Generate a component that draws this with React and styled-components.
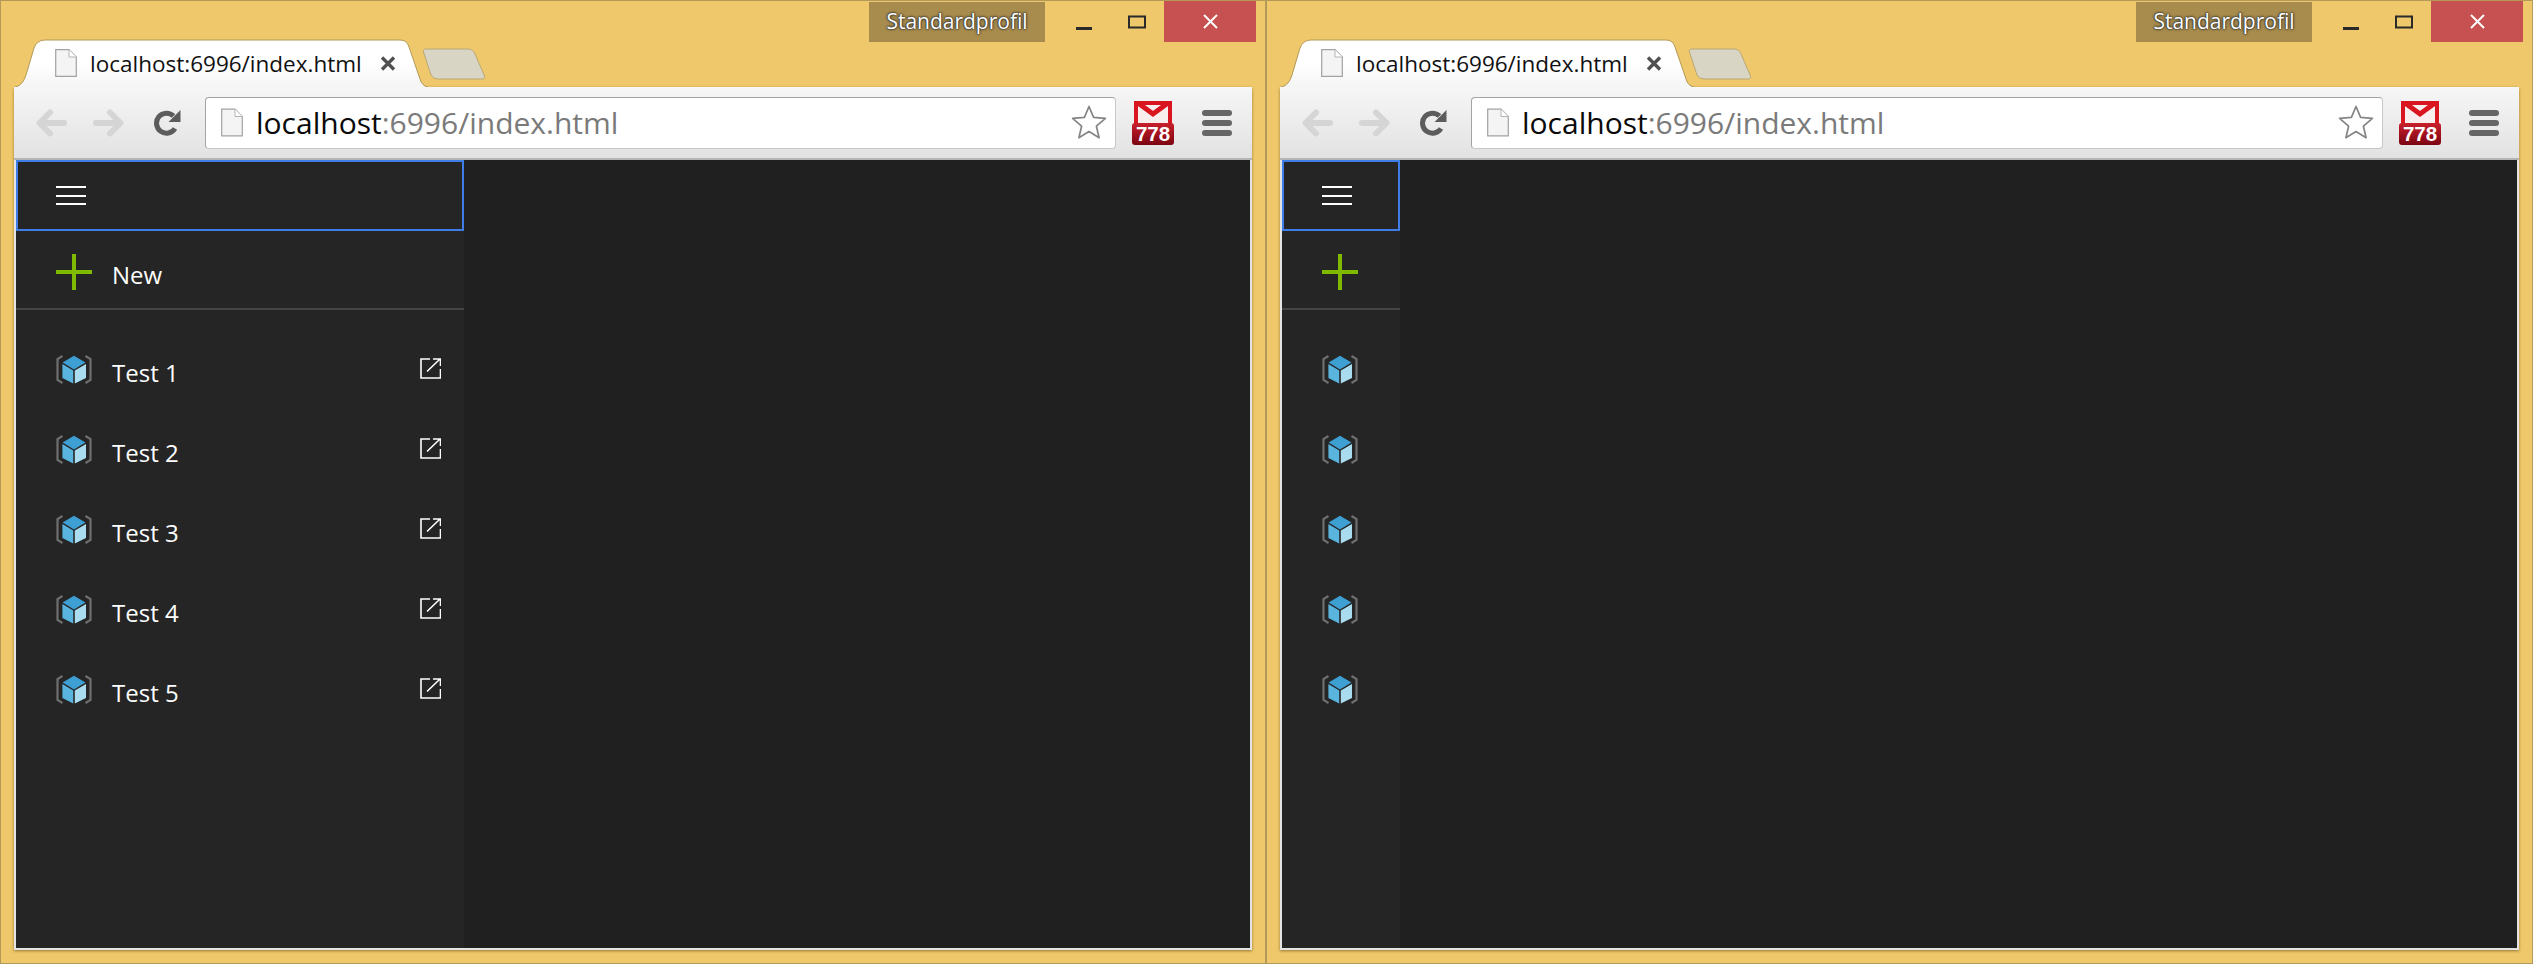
import React from "react";
import styled, { createGlobalStyle } from "styled-components";

const GlobalStyle = createGlobalStyle`
  html, body {
    margin: 0;
    padding: 0;
    overflow: hidden;
    background: #eec86a;
    font-family: "Open Sans", "Noto Sans", sans-serif;
  }
`;

const Page = styled.div`
  display: grid;
  grid-template-columns: 1266px 1267px;
  height: 964px;
`;

const Window = styled.div`
  display: flex;
  flex-direction: column;
  box-sizing: border-box;
  height: 964px;
  padding: 0 13px 13px 14px;
  background: #eec86a;
  border: 1px solid #b39a58;
`;

const CaptionRow = styled.div`
  display: flex;
  justify-content: flex-end;
  align-items: flex-start;
  height: 41px;
  margin-right: -4px;
`;

const ProfileBadge = styled.div`
  width: 176px;
  height: 40px;
  margin-top: 1px;
  background: #a88c4d;
  color: #fff;
  font-size: 21px;
  line-height: 38px;
  text-align: center;
  text-shadow: 0 0 3px #2c2c2c, 0 0 2px #2c2c2c, 0 0 1px #2c2c2c;
`;

const CaptionButton = styled.div`
  display: flex;
  align-items: center;
  justify-content: center;
  width: ${(p) => p.$width}px;
  margin-right: ${(p) => p.$gap || 0}px;
  height: 41px;
  background: ${(p) => p.$bg || "transparent"};
`;

const MinimizeGlyph = styled.svg`
  margin-top: 8px;
`;

const TabStrip = styled.div`
  display: flex;
  align-items: flex-start;
  height: 48px;
  margin-top: -3px;
`;

const Tab = styled.div`
  position: relative;
  display: flex;
  align-items: center;
  box-sizing: border-box;
  width: 413px;
  height: 48px;
  padding: 0 0 0 40px;
`;

const TabShape = styled.svg`
  position: absolute;
  left: 0;
  top: 0;
`;

const TabTitle = styled.span`
  position: relative;
  margin: 0 19px 0 13px;
  width: 271px;
  font-size: 22.5px;
  white-space: nowrap;
  color: #111;
`;

const TabClose = styled.svg`
  position: relative;
`;

const NewTab = styled.svg`
  margin: 9px 0 0 -6px;
`;

const Frame = styled.div`
  display: flex;
  flex-direction: column;
  flex: 1;
  min-height: 0;
  margin-left: -1px;
  padding: 0 2px 2px;
  background: #e4e4e4;
  box-shadow: 0 1px 3px rgba(90, 70, 20, 0.6);
  border-radius: 3px 3px 0 0;
`;

const Toolbar = styled.div`
  display: flex;
  align-items: center;
  box-sizing: border-box;
  height: 73px;
  margin: 0 -2px;
  padding: 0 20px 0 22px;
  background: linear-gradient(#f6f6f6, #e2e2e2);
  border-bottom: 2px solid #b4b4b4;
`;

const NavIcon = styled.svg`
  flex: none;
  margin-right: ${(p) => p.$gap || 0}px;
  transform: ${(p) => (p.$flip ? "scaleX(-1)" : "none")};
`;

const PageGlyph = styled.svg`
  position: relative;
  flex: none;
`;

const AddressBox = styled.div`
  display: flex;
  align-items: center;
  flex: 1;
  box-sizing: border-box;
  height: 52px;
  margin: 0 16px 0 24px;
  padding: 0 8px 0 15px;
  background: #fff;
  border: 1px solid #a4a4a4;
  border-bottom-color: #c8c8c8;
  border-right-color: #c8c8c8;
  border-radius: 4px;
`;

const Url = styled.span`
  flex: 1;
  margin-left: 13px;
  font-size: 30px;
  white-space: nowrap;
  color: #7a7a7a;

  b {
    font-weight: 400;
    color: #0a0a0a;
  }
`;

const Extension = styled.div`
  display: flex;
  flex-direction: column;
  align-items: center;
  width: 42px;
  margin-right: 28px;
`;

const MailCount = styled.div`
  width: 42px;
  height: 22px;
  margin-top: -1px;
  border-radius: 3px;
  background: linear-gradient(#c8202c, #7c0412);
  color: #fff;
  font-family: "Liberation Sans", Arial, sans-serif;
  font-size: 20.5px;
  font-weight: 700;
  line-height: 22px;
  text-align: center;
`;

const MenuButton = styled.div`
  display: flex;
  flex-direction: column;
  gap: 4px;
  width: 30px;
`;

const MenuBar = styled.div`
  height: 6px;
  border-radius: 3px;
  background: #666;
`;

const Content = styled.div`
  display: flex;
  flex: 1;
  min-height: 0;
  background: #202020;
`;

const Sidebar = styled.nav`
  flex: none;
  width: ${(p) => (p.$collapsed ? 118 : 448)}px;
  background: #252525;
`;

const MenuToggle = styled.div`
  display: flex;
  align-items: center;
  box-sizing: border-box;
  height: 71px;
  padding-left: 38px;
  border: 2px solid #3f7ee8;
`;

const NewRow = styled.div`
  display: flex;
  align-items: center;
  box-sizing: border-box;
  height: 79px;
  padding: 5px 0 0 40px;
  border-bottom: 2px solid #444;
`;

const PlusGlyph = styled.svg`
  flex: none;
`;

const Items = styled.ul`
  margin: 0;
  padding: 20px 0 0;
  list-style: none;
`;

const Item = styled.li`
  display: flex;
  align-items: center;
  height: 80px;
  padding: 0 23px 0 40px;
`;

const CubeGlyph = styled.svg`
  flex: none;
`;

const Label = styled.span`
  flex: 1;
  margin-left: 20px;
  padding-top: 4px;
  font-size: 24px;
  color: #fff;
`;

const ExternalLink = styled.svg`
  margin-bottom: 4px;
`;

const Main = styled.main`
  flex: 1;
`;

const PageIcon = ({ width, height }) => (
  <PageGlyph width={width} height={height} viewBox="0 0 22 28">
    <path d="M.7.7H14L21.3 8V27.3H.7Z" fill="#f4f4f4" stroke="#a2a2a2" strokeWidth="1.2" />
    <path d="M14 .7V8H21.3" fill="#fff" stroke="#b4b4b4" strokeWidth="1" />
  </PageGlyph>
);

const Arrow = ({ flip, gap }) => (
  <NavIcon $flip={flip} $gap={gap} width="31" height="28" viewBox="0 0 31 28">
    <path d="M28 14H4M14 3.5L3.5 14L14 24.5" fill="none" stroke="#d5d5d5" strokeWidth="6" strokeLinecap="round" strokeLinejoin="round" />
  </NavIcon>
);

const Reload = () => (
  <NavIcon width="27" height="28" viewBox="0 0 27 28">
    <path d="M21 19.500A10 10 0 1 1 19.500 7" fill="none" stroke="#5c5c5c" strokeWidth="5" />
    <path d="M26.500 1V13H14.500Z" fill="#5c5c5c" />
  </NavIcon>
);

const Star = () => (
  <svg width="36" height="35" viewBox="0 0 36 35">
    <path d="M18 1.500L22.600 12.400L34.400 13.400L25.400 21.200L28.100 32.700L18 26.600L7.900 32.700L10.600 21.200L1.600 13.400L13.400 12.400Z" fill="#fff" stroke="#858585" strokeWidth="1.700" strokeLinejoin="round" />
  </svg>
);

const MailIcon = () => (
  <svg width="38" height="23" viewBox="0 0 38 23">
    <rect width="38" height="23" fill="#d9161f" />
    <rect x="4" y="4" width="30" height="19" fill="#f8eeee" />
    <path d="M4 2L19 13L34 2" fill="none" stroke="#d9161f" strokeWidth="5" />
  </svg>
);

const Cube = () => (
  <CubeGlyph width="36" height="30" viewBox="0 0 36 30">
    <path d="M6.500 1L1.500 4V25L6.500 28" fill="none" stroke="#6f6f6f" strokeWidth="2.200" />
    <path d="M29.500 1L34.500 4V25L29.500 28" fill="none" stroke="#6f6f6f" strokeWidth="2.200" />
    <path d="M18 .8L29.500 7.600L18 14.400L6.600 7.600Z" fill="#3d9fd2" />
    <path d="M6.400 9L17.200 15.400V28.600L6.400 23Z" fill="#59b4de" />
    <path d="M18.800 15.400L30 9V23L18.800 28.600Z" fill="#a9dcef" />
  </CubeGlyph>
);

const items = ["Test 1", "Test 2", "Test 3", "Test 4", "Test 5"];

const BrowserWindow = ({ collapsed }) => (
  <Window>
    <CaptionRow>
      <ProfileBadge>Standardprofil</ProfileBadge>
      <CaptionButton $width={78}>
        <MinimizeGlyph width="16" height="16" viewBox="0 0 16 16">
          <rect y="9" width="16" height="3" fill="#2a2a2a" />
        </MinimizeGlyph>
      </CaptionButton>
      <CaptionButton $width={28} $gap={13}>
        <svg width="18" height="14" viewBox="0 0 18 14">
          <rect x="1" y="1.500" width="16" height="11" fill="none" stroke="#2a2a2a" strokeWidth="2" />
        </svg>
      </CaptionButton>
      <CaptionButton $width={92} $bg="#c75050">
        <svg width="15" height="15" viewBox="0 0 15 15">
          <path d="M1 1L14 14M14 1L1 14" stroke="#fff" strokeWidth="2" />
        </svg>
      </CaptionButton>
    </CaptionRow>
    <TabStrip>
      <Tab>
        <TabShape width="413" height="48" viewBox="0 0 413 48">
          <defs>
            <linearGradient id={collapsed ? "tabR" : "tabL"} x1="0" y1="0" x2="0" y2="1">
              <stop offset="0.5" stopColor="#fff" />
              <stop offset="1" stopColor="#f5f5f5" />
            </linearGradient>
          </defs>
          <path
            d="M0 48C6 47 9 42 11 36L19 9Q22 1 30 1H385Q392 1 394 8L405 40Q407 47 413 48Z"
            fill={`url(#${collapsed ? "tabR" : "tabL"})`}
          />
          <path
            d="M0 48C6 47 9 42 11 36L19 9Q22 1 30 1H385Q392 1 394 8L405 40Q407 47 413 48"
            fill="none"
            stroke="#b39a58"
          />
        </TabShape>
        <PageIcon width={22} height={28} />
        <TabTitle>localhost:6996/index.html</TabTitle>
        <TabClose width="16" height="15" viewBox="0 0 16 15">
          <path d="M2 1.500L14 13.500M14 1.500L2 13.500" stroke="#505050" strokeWidth="3.400" />
        </TabClose>
      </Tab>
      <NewTab width="64" height="32" viewBox="0 0 64 32">
        <path
          d="M1.500 4Q.5 1 4 1H46Q51 1 53 6L62.500 28Q63.500 31 60 31H16Q11 31 9 27Z"
          fill="#d9d5c5"
          stroke="#baa877"
        />
      </NewTab>
    </TabStrip>
    <Frame>
      <Toolbar>
        <Arrow gap={26} />
        <Arrow flip gap={30} />
        <Reload />
        <AddressBox>
          <PageIcon width={22} height={29} />
          <Url>
            <b>localhost</b>:6996/index.html
          </Url>
          <Star />
        </AddressBox>
        <Extension>
          <MailIcon />
          <MailCount>778</MailCount>
        </Extension>
        <MenuButton>
          <MenuBar />
          <MenuBar />
          <MenuBar />
        </MenuButton>
      </Toolbar>
      <Content>
        <Sidebar $collapsed={collapsed}>
          <MenuToggle>
            <svg width="30" height="20" viewBox="0 0 30 20">
              <path d="M0 1H30M0 10H30M0 18H30" stroke="#fff" strokeWidth="2" />
            </svg>
          </MenuToggle>
          <NewRow>
            <PlusGlyph width="36" height="36" viewBox="0 0 36 36">
              <path d="M18 0V36M0 18H36" stroke="#7fba00" strokeWidth="4" />
            </PlusGlyph>
            {!collapsed && <Label>New</Label>}
          </NewRow>
          <Items>
            {items.map((name) => (
              <Item key={name}>
                <Cube />
                {!collapsed && <Label>{name}</Label>}
                {!collapsed && (
                  <ExternalLink width="21" height="21" viewBox="0 0 21 21">
                    <path
                      d="M10 1H1V20H20.500V11M7 13.500L20 1M13 1H20.500V8"
                      fill="none"
                      stroke="#fff"
                      strokeWidth="1.600"
                    />
                  </ExternalLink>
                )}
              </Item>
            ))}
          </Items>
        </Sidebar>
        <Main />
      </Content>
    </Frame>
  </Window>
);

export default function App() {
  return (
    <>
      <GlobalStyle />
      <Page>
        <BrowserWindow />
        <BrowserWindow collapsed />
      </Page>
    </>
  );
}
